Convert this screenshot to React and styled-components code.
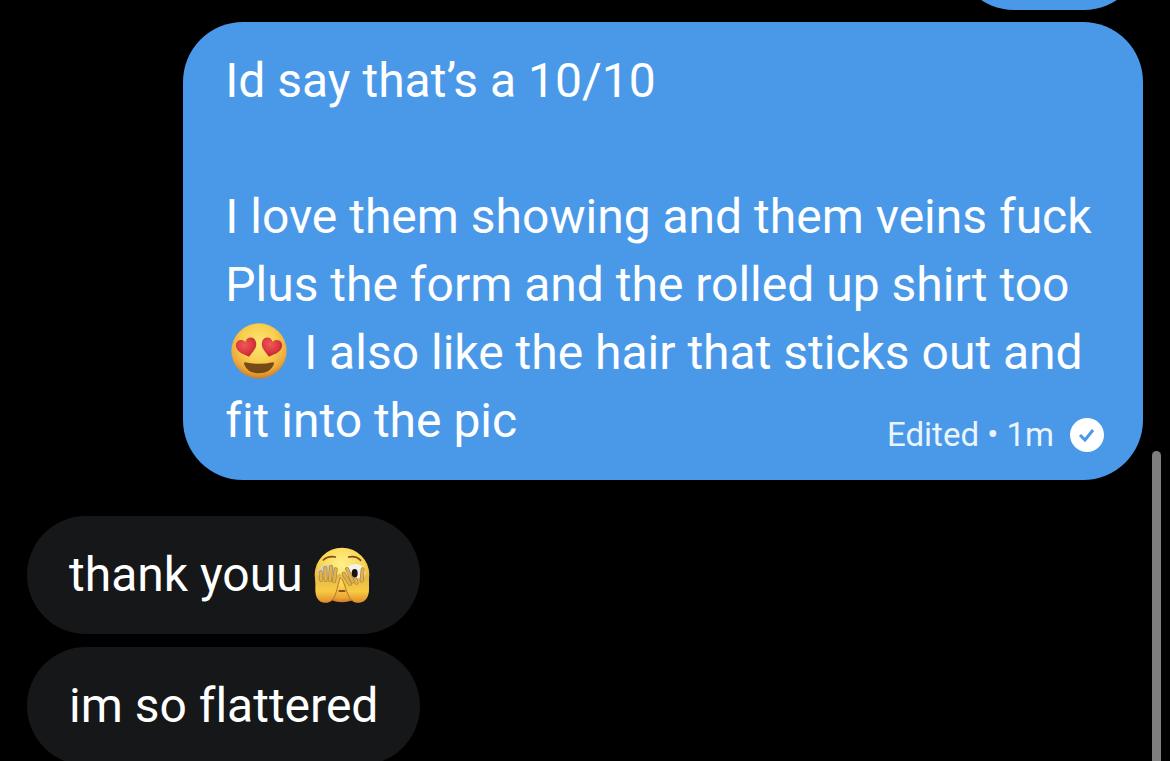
import styled, { createGlobalStyle } from "styled-components";

const GlobalStyle = createGlobalStyle`
  body {
    margin: 0;
    background-color: #000;
    font-family: Roboto, "Liberation Sans", sans-serif;
  }
`;

// Styled Components
const Thread = styled.main`
  position: relative;
  box-sizing: border-box;
  display: flex;
  flex-direction: column;
  gap: 36px;
  height: 100vh;
  overflow: hidden;
  padding: 0 27px;
`;

const Group = styled.section`
  display: flex;
  flex-direction: column;
  align-items: ${(props) => (props.$sent ? "flex-end" : "flex-start")};
  gap: ${(props) => (props.$sent ? "12px" : "13px")};
`;

const Bubble = styled.div`
  position: relative;
  box-sizing: border-box;
  flex-shrink: 0;
  max-width: 86%;
  min-height: 118px;
  padding: 25px 42px;
  border-radius: 60px;
  background-color: ${(props) => (props.$sent ? "#4a99e9" : "#151719")};
  color: #fff;
`;

// Older message, almost scrolled out of the thread
const OlderBubble = styled(Bubble)`
  min-width: 188px;
  margin-top: -108px;
`;

const Text = styled.p`
  margin: 0;
  font-size: 48px;
  line-height: 68px;
  font-variant-ligatures: none;
  white-space: pre-wrap;
`;

const Meta = styled.div`
  position: absolute;
  right: 38px;
  bottom: 25px;
  display: flex;
  align-items: center;
  gap: 16px;
  color: #eaf4fd;
  font-size: 33px;
  line-height: 40px;
`;

const Badge = styled.svg`
  width: 35px;
  height: 35px;
`;

const Emoji = styled.svg`
  width: 56px;
  height: 56px;
  margin: 0 5px 0 6px;
  vertical-align: -10px;
`;

const TrailingEmoji = styled(Emoji)`
  margin: 0 8px 0 11px;
  vertical-align: -12px;
`;

const ScrollThumb = styled.div`
  position: absolute;
  top: 451px;
  right: 9px;
  bottom: -9px;
  width: 9px;
  border-radius: 5px;
  background-color: #7e7e7e;
`;

function HeartEyes() {
  const heart = "M0 29C-9 20-30 11-30-8C-30-27-8-31 0-16C8-31 30-27 30-8C30 11 9 20 0 29Z";
  return (
    <Emoji viewBox="36 27 164 164" role="img" aria-label="heart eyes">
      <defs>
        <radialGradient id="heartFace" cx="50%" cy="36%" r="66%">
          <stop offset="0" stopColor="#fbe774" />
          <stop offset="0.5" stopColor="#f8ce4e" />
          <stop offset="0.8" stopColor="#eba83a" />
          <stop offset="1" stopColor="#c87425" />
        </radialGradient>
        <radialGradient id="heartRed" cx="42%" cy="32%" r="70%">
          <stop offset="0" stopColor="#ee5a55" />
          <stop offset="0.6" stopColor="#dc3640" />
          <stop offset="1" stopColor="#b5222e" />
        </radialGradient>
      </defs>
      <circle cx="118" cy="109" r="81" fill="url(#heartFace)" />
      <path d={heart} transform="translate(82 98) rotate(-14)" fill="url(#heartRed)" />
      <path d={heart} transform="translate(154 98) rotate(14)" fill="url(#heartRed)" />
      <path d="M77 142Q118 151 159 142Q163 142 161 149Q151 174 118 174Q85 174 75 149Q73 142 77 142Z" fill="#764a16" />
    </Emoji>
  );
}

function PeekingFace() {
  const leftFingers = ["M49 120L47 97", "M62 120L61 84", "M75 120L78 80", "M87 124L92 88"];
  const rightFingers = ["M135 132L116 101", "M143 124L126 87", "M155 128L151 118", "M170 122L173 88"];
  return (
    <TrailingEmoji viewBox="27 21 168 168" role="img" aria-label="peeking through fingers">
      <defs>
        <radialGradient id="peekFace" cx="50%" cy="30%" r="72%">
          <stop offset="0" stopColor="#fff18a" />
          <stop offset="0.55" stopColor="#fad550" />
          <stop offset="0.85" stopColor="#eba636" />
          <stop offset="1" stopColor="#c97224" />
        </radialGradient>
        <linearGradient id="peekHand" x1="0" y1="0" x2="0" y2="1">
          <stop offset="0" stopColor="#e2b54a" />
          <stop offset="0.6" stopColor="#f8cb43" />
          <stop offset="1" stopColor="#e08c2b" />
        </linearGradient>
      </defs>
      <circle cx="111" cy="105" r="82" fill="url(#peekFace)" />
      <path d="M55 60Q69 47 91 51M131 51Q153 46 167 61" fill="none" stroke="#7b4a16" strokeWidth="5" strokeLinecap="round" />
      <ellipse cx="68" cy="99" rx="29" ry="25" fill="#d6d1c6" />
      <ellipse cx="151" cy="97" rx="30" ry="25" fill="#f3f1ec" />
      <ellipse cx="149" cy="100" rx="9" ry="13" fill="#201208" />
      <path d="M101 153H121" fill="none" stroke="#8a5218" strokeWidth="6" />
      <path d="M31 110C34 104 42 108 48 112H88L103 101C109 101 109 106 107 111C100 126 99 140 93 158C86 181 75 189 58 188C39 187 32 171 31 151Z" fill="url(#peekHand)" />
      <path d="M192 107C186 103 176 113 170 115H137L115 105C108 102 107 108 110 115C119 131 121 145 128 161C135 181 145 189 163 188C182 187 191 171 192 151Z" fill="url(#peekHand)" />
      {[...leftFingers, ...rightFingers].map((finger) => (
        <g key={finger} fill="none" strokeLinecap="round">
          <path d={finger} stroke="#a9833f" strokeWidth="12" />
          <path d={finger} stroke="#e0b448" strokeWidth="8" />
        </g>
      ))}
      <path d="M107 111C100 126 99 140 93 158C89 171 84 180 75 184M110 115C119 131 121 145 128 161C132 172 137 180 146 184" fill="none" stroke="#b8762a" strokeWidth="3" />
    </TrailingEmoji>
  );
}

function VerifiedBadge() {
  return (
    <Badge viewBox="0 0 35 35" role="img" aria-label="Delivered">
      <circle cx="17" cy="17" r="17" fill="#fff" />
      <path d="M10 17L15 22L23 12" fill="none" stroke="#4a99e9" strokeWidth="3" />
    </Badge>
  );
}

function App() {
  return (
    <>
      <GlobalStyle />
      <Thread>

        {/* SENT MESSAGES */}
        <Group $sent>
          <OlderBubble $sent />
          <Bubble $sent>
            <Text>
              {"Id say that’s a 10/10\n\nI love them showing and them veins fuck\nPlus the form and the rolled up shirt too "}
              <HeartEyes />
              {" I also like the hair that sticks out and fit into the pic"}
            </Text>
            <Meta>
              <span>Edited • 1m</span>
              <VerifiedBadge />
            </Meta>
          </Bubble>
        </Group>

        {/* RECEIVED MESSAGES */}
        <Group>
          <Bubble>
            <Text>thank youu<PeekingFace /></Text>
          </Bubble>
          <Bubble>
            <Text>im so flattered</Text>
          </Bubble>
        </Group>

        <ScrollThumb />
      </Thread>
    </>
  );
}

export default App;
